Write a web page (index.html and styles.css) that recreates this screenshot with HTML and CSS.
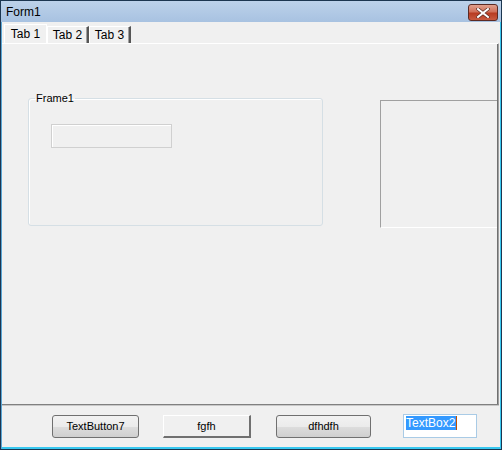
FILE: index.html
```html
<!DOCTYPE html>
<html lang="en">
<head>
  <meta charset="UTF-8" />
  <title>Form1</title>
  <link rel="stylesheet" href="styles.css">
</head>
<body>
  <div class="window">
    <div class="titlebar">
      <span class="title">Form1</span>
      <button class="close-btn">
        <svg width="14" height="10" viewBox="0 0 14 10">
          <path d="M2 1 L12 9 M12 1 L2 9" stroke="#5a2a22" stroke-width="3.4" stroke-linecap="square"/>
          <path d="M2 1 L12 9 M12 1 L2 9" stroke="#ffffff" stroke-width="2" stroke-linecap="square"/>
        </svg>
      </button>
    </div>
    <div class="client">
      <div class="tabs">
        <div class="tab active">Tab 1</div>
        <div class="tab">Tab 2</div>
        <div class="tab">Tab 3</div>
      </div>
      <div class="page">
        <fieldset class="frame">
          <legend>Frame1</legend>
          <div class="inner-box"></div>
        </fieldset>
        <div class="picture-box"></div>
      </div>
      <div class="footer">
        <button class="btn">TextButton7</button>
        <button class="btn flat">fgfh</button>
        <button class="btn">dfhdfh</button>
        <div class="textbox"><span class="sel">TextBox2</span><span class="caret"></span></div>
      </div>
    </div>
  </div>
</body>
</html>
```

FILE: styles.css
```css
body {
  margin: 0;
  font-family: 'Liberation Sans', Arial, sans-serif;
  font-size: 11px;
  color: #000;
}

.window {
  width: 500px;
  height: 448px;
  border: 1px solid #1c3650;
  box-shadow: inset 1px 0 0 #5aa7d6, inset -1px 0 0 #38c8f0, inset 0 -2px 0 #38c8f0;
  background: #f0f0f0;
  display: flex;
  flex-direction: column;
}

.titlebar {
  height: 21px;
  background: linear-gradient(#bcd2ea, #a8c2e1);
  display: flex;
  align-items: center;
  justify-content: space-between;
  padding: 0 3px 0 5px;
}

.title {
  font-size: 12px;
  color: #000;
}

.close-btn {
  width: 30px;
  height: 17px;
  margin-top: 2px;
  border: 1px solid #5b2a24;
  border-radius: 3px;
  background: linear-gradient(#e0a08e 0%, #d0705a 45%, #b83c22 55%, #c85a40 100%);
  display: flex;
  align-items: center;
  justify-content: center;
  padding: 0;
}

.client {
  flex: 1;
  display: flex;
  flex-direction: column;
  margin: 0 2px 2px 1px;
}

.tabs {
  display: flex;
  height: 21px;
  padding: 0 0 0 2px;
  align-items: flex-end;
}

.tab {
  box-sizing: border-box;
  width: 42px;
  height: 17px;
  text-align: center;
  line-height: 16px;
  font-size: 12px;
  border-top: 1px solid #fff;
  border-left: 1px solid #fff;
  border-right: 2px solid #555;
  box-shadow: inset -1px 0 0 #a0a0a0;
}

.tab.active {
  width: 43px;
  height: 19px;
  line-height: 18px;
  border-right: 1px solid #fff;
  box-shadow: none;
}

.page {
  flex: 1;
  display: flex;
  align-items: flex-start;
  border-top: 1px solid #fff;
  border-right: 1px solid #a0a0a0;
  border-bottom: 1px solid #808080;
  box-shadow: inset -1px 0 0 #707070, 0 1px 0 #c8c8c8;
}

.frame {
  box-sizing: border-box;
  width: 295px;
  height: 134px;
  margin: 48px 0 0 26px;
  padding: 0;
  border: 1px solid #d5dfe5;
  border-radius: 3px;
  box-shadow: inset 1px 1px 0 #fff;
}

.frame legend {
  padding: 0 1px;
  margin-left: 6px;
  font-size: 11px;
}

.inner-box {
  width: 119px;
  height: 22px;
  margin: 20px 0 0 22px;
  border: 1px solid #d0d0d0;
  box-shadow: inset 1px 1px 0 #fff;
}

.picture-box {
  flex: 1;
  height: 126px;
  margin: 56px 1px 0 57px;
  border-top: 1px solid #a0a0a0;
  border-left: 1px solid #a0a0a0;
  border-bottom: 1px solid #fff;
}

.footer {
  height: 42px;
  display: flex;
  align-items: center;
  padding: 0 0 0 50px;
}

.btn {
  height: 23px;
  width: 87px;
  margin-right: 24px;
  font-family: 'Liberation Sans', Arial, sans-serif;
  font-size: 11px;
  border: 1px solid #707070;
  border-radius: 3px;
  background: linear-gradient(#f2f2f2 0%, #ebebeb 50%, #dddddd 51%, #cfcfcf 100%);
  padding: 0;
}

.btn.flat {
  width: 88px;
  border-radius: 0;
  border: 1px solid #fff;
  border-right: 2px solid #707070;
  border-bottom: 2px solid #707070;
  background: #f0f0f0;
  margin-right: 25px;
}

.btn:nth-child(3) {
  width: 95px;
  margin-right: 32px;
}

.textbox {
  width: 68px;
  height: 20px;
  border: 1px solid #a9cbe6;
  background: #fff;
  padding: 1px 2px;
  display: flex;
  align-items: flex-start;
}

.sel {
  background: #3399ff;
  color: #fff;
  font-size: 12px;
  line-height: 14px;
  padding-right: 1px;
}

.caret {
  width: 1px;
  height: 14px;
  background: #c05000;
}
```
